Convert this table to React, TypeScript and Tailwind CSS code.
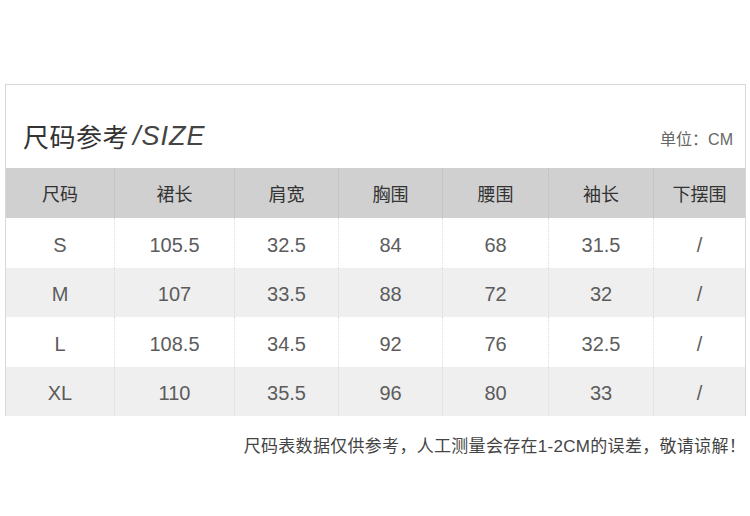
import React from 'react';

const headers = ['尺码', '裙长', '肩宽', '胸围', '腰围', '袖长', '下摆围'];

const rows = [
    ['S', '105.5', '32.5', '84', '68', '31.5', '/'],
    ['M', '107', '33.5', '88', '72', '32', '/'],
    ['L', '108.5', '34.5', '92', '76', '32.5', '/'],
    ['XL', '110', '35.5', '96', '80', '33', '/'],
];

const font = { fontFamily: '"Liberation Sans", "Noto Sans CJK SC", sans-serif' };
const cols = 'grid grid-cols-[108px_120px_104px_104px_106px_105px_1fr]';

export default function App() {
    return (
        <div className="w-[750px] h-[516px] bg-white pt-[84px]" style={font}>
            <div className="ml-[5px] w-[741px] border-t border-x border-[#d8d8d8]">
                <div className="h-[83px] flex items-end justify-between pl-[17px] pr-[12px] pb-[17px]">
                    <h1 className="text-[26px] leading-none text-[#333] tracking-[0.5px] flex items-end gap-[4px]">
                        <span>尺码参考</span>
                        <span className="italic font-light text-[#444] text-[27px] tracking-[1px] mb-[1px]">/SIZE</span>
                    </h1>
                    <span className="text-[16px] leading-none text-[#666] mb-[3px]">单位：CM</span>
                </div>
                <div className={`${cols} h-[50px] bg-[#d0d0d0] text-[18px] text-[#333]`}>
                    {headers.map((h, i) => (
                        <div key={h} className={`flex items-center justify-center pt-[4px] ${i > 0 ? 'border-l border-dotted border-[#bdbdbd]' : ''}`}>
                            {h}
                        </div>
                    ))}
                </div>
                {rows.map((row, r) => (
                    <div key={row[0]} className={`${cols} h-[49.5px] text-[20px] text-[#5c5c5c] ${r % 2 ? 'bg-[#efefef]' : 'bg-white'}`}>
                        {row.map((cell, i) => (
                            <div key={i} className={`flex items-center justify-center pt-[4px] ${i > 0 ? 'border-l border-dotted border-[#dcdcdc]' : ''}`}>
                                {cell}
                            </div>
                        ))}
                    </div>
                ))}
            </div>
            <p className="mt-[18px] pr-[4px] text-right text-[17px] text-[#444] tracking-[0.3px]">
                尺码表数据仅供参考，人工测量会存在1-2CM的误差，敬请谅解！
            </p>
        </div>
    );
}
